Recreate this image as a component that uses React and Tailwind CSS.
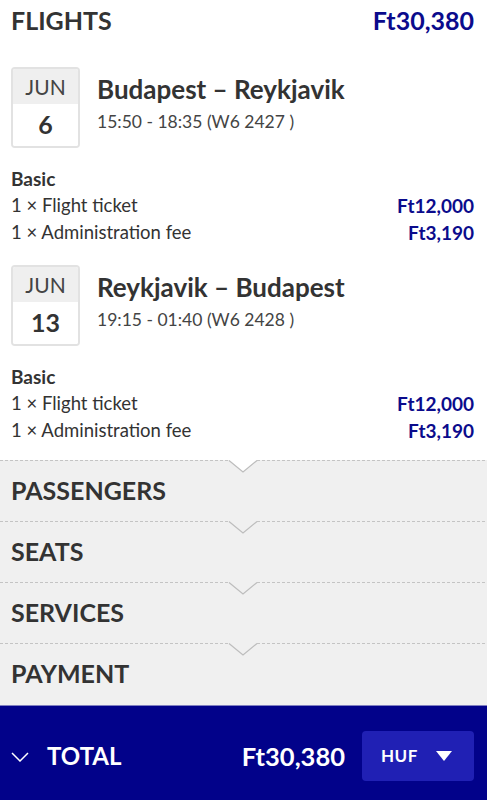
const FONT = { fontFamily: 'Lato, "Noto Sans", sans-serif' }

const FLIGHTS = [
  { day: '6', route: 'Budapest – Reykjavik', time: '15:50 - 18:35 (W6 2427 )' },
  { day: '13', route: 'Reykjavik – Budapest', time: '19:15 - 01:40 (W6 2428 )' },
]

function DateBox({ month, day }) {
  return (
    <div className="w-[69px] h-[81px] rounded-[4px] border-2 border-[#e2e2e2] overflow-hidden flex flex-col shrink-0">
      <div className="h-[35px] bg-[#efefef] flex items-center justify-center text-[21px] text-[#444]">{month}</div>
      <div className="flex-1 bg-white flex items-center justify-center text-[25px] font-bold text-[#333]">{day}</div>
    </div>
  )
}

function Flight({ f }) {
  return (
    <div>
      <div className="flex items-start gap-[17px] pl-[11px]">
        <DateBox month="JUN" day={f.day} />
        <div className="pt-[5px]">
          <div className="text-[26px] font-bold text-[#333] leading-[34px]">{f.route}</div>
          <div className="mt-[4px] text-[17.5px] text-[#444] leading-[24px]">{f.time}</div>
        </div>
      </div>
      <div className="pl-[11px] pr-[13px] pt-[17px] text-[19px] leading-[27px] text-[#333]">
        <div className="font-bold">Basic</div>
        <div className="flex justify-between">
          <span className="text-[18.5px]">1 × Flight ticket</span>
          <span className="font-bold text-[#0b0b8c]">Ft12,000</span>
        </div>
        <div className="flex justify-between">
          <span className="text-[18.5px]">1 × Administration fee</span>
          <span className="font-bold text-[#0b0b8c]">Ft3,190</span>
        </div>
      </div>
    </div>
  )
}

function Section({ title, top }) {
  return (
    <div className="relative h-[61px] flex items-center pl-[11px] text-[25px] font-bold text-[#333]">
      <svg width="487" height="14" className="absolute left-0 top-0 block">
        <polygon points="0,0 229,0 243,12 257,0 487,0" fill={top} />
        <line x1="0" y1="0.5" x2="229" y2="0.5" stroke="#c4c4c4" strokeWidth="1" strokeDasharray="3 2" />
        <line x1="257" y1="0.5" x2="487" y2="0.5" stroke="#c4c4c4" strokeWidth="1" strokeDasharray="3 2" />
        <polyline points="229,0.5 243,12 257,0.5" fill="none" stroke="#bdbdbd" strokeWidth="1.2" />
      </svg>
      <span className="pt-[1px]">{title}</span>
    </div>
  )
}

export default function App() {
  return (
    <div className="w-[487px] h-[800px] bg-white flex flex-col overflow-hidden" style={FONT}>
      <div className="flex justify-between items-center pl-[11px] pr-[13px] h-[40px] text-[25px] font-bold leading-[40px]">
        <span className="text-[#333]">FLIGHTS</span>
        <span className="text-[#0b0b8c]">Ft30,380</span>
      </div>
      <div className="pt-[27px] flex flex-col gap-[19px]">
        {FLIGHTS.map(f => <Flight key={f.day} f={f} />)}
      </div>
      <div className="mt-[16px] bg-[#f0f0f0] flex-1">
        <Section title="PASSENGERS" top="#ffffff" />
        <Section title="SEATS" top="#f0f0f0" />
        <Section title="SERVICES" top="#f0f0f0" />
        <Section title="PAYMENT" top="#f0f0f0" />
      </div>
      <div className="h-[95px] shrink-0 bg-[#02028a] border-t border-[#8080c0] flex items-center pt-[6px] pl-[11px] pr-[13px] text-white">
        <svg width="18" height="10" viewBox="0 0 18 10" className="mt-[2px]">
          <polyline points="1,1 9,9 17,1" fill="none" stroke="white" strokeWidth="1.5" />
        </svg>
        <span className="ml-[18px] text-[24px] font-bold">TOTAL</span>
        <span className="ml-auto text-[25.5px] font-bold">Ft30,380</span>
        <div className="ml-[17px] w-[112px] h-[50px] rounded-[4px] bg-[#2020b4] flex items-center justify-between pl-[19px] pr-[22px]">
          <span className="text-[17px] font-bold tracking-[0.5px]">HUF</span>
          <svg width="16" height="11" viewBox="0 0 16 11"><polygon points="0,0 16,0 8,10" fill="white" /></svg>
        </div>
      </div>
    </div>
  )
}
